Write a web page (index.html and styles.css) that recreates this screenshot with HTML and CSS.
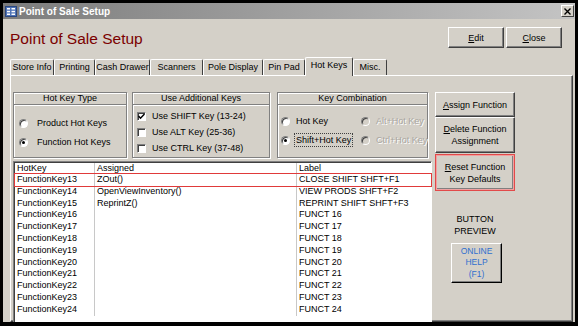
FILE: index.html
```html
<!DOCTYPE html>
<html lang="en">
<head>
  <meta charset="UTF-8">
  <title>Point of Sale Setup</title>
  <link rel="stylesheet" href="styles.css">
</head>
<body>
<div class="window">
  <div class="titlebar">
    <svg class="app-icon" width="12" height="11" viewBox="0 0 12 11">
      <rect x="0.5" y="0.5" width="11" height="10" fill="#4f74b8" stroke="#2b477f"/>
      <rect x="2" y="2" width="3" height="1.5" fill="#fff"/>
      <rect x="2" y="4.8" width="3" height="1.5" fill="#fff"/>
      <rect x="2" y="7.5" width="3" height="1.5" fill="#fff"/>
      <rect x="6.5" y="2" width="3.5" height="1.5" fill="#fff"/>
      <rect x="6.5" y="4.8" width="3.5" height="1.5" fill="#fff"/>
      <rect x="6.5" y="7.5" width="3.5" height="1.5" fill="#fff"/>
    </svg>
    <span class="title-text">Point of Sale Setup</span>
    <span class="title-close">
      <svg width="7" height="7" viewBox="0 0 7 7"><path d="M0.5 0.5 L6.5 6.5 M6.5 0.5 L0.5 6.5" stroke="#000" stroke-width="1.4"/></svg>
    </span>
  </div>

  <div class="header">
    <h1>Point of Sale Setup</h1>
    <div class="header-buttons">
      <button class="btn btn-head"><u>E</u>dit</button>
      <button class="btn btn-head"><u>C</u>lose</button>
    </div>
  </div>

  <div class="tabs">
    <div class="tab">Store Info</div>
    <div class="tab">Printing</div>
    <div class="tab">Cash Drawer</div>
    <div class="tab">Scanners</div>
    <div class="tab">Pole Display</div>
    <div class="tab">Pin Pad</div>
    <div class="tab tab-active">Hot Keys</div>
    <div class="tab">Misc.</div>
  </div>

  <div class="panel">
    <div class="left">
      <div class="groups">
        <div class="group group-type">
          <div class="group-head">Hot Key Type</div>
          <div class="type-body">
            <div class="opt"><span class="radio"></span>Product Hot Keys</div>
            <div class="opt"><span class="radio on"></span>Function Hot Keys</div>
          </div>
        </div>
        <div class="group group-extra">
          <div class="group-head">Use Additional Keys</div>
          <div class="extra-body">
            <div class="opt"><span class="check"><svg width="7" height="7" viewBox="0 0 7 7"><path d="M0.5 3 L2.5 5.2 L6.5 1" fill="none" stroke="#000" stroke-width="1.5"/></svg></span>Use SHIFT Key (13-24)</div>
            <div class="opt"><span class="check"></span>Use ALT Key (25-36)</div>
            <div class="opt"><span class="check"></span>Use CTRL Key (37-48)</div>
          </div>
        </div>
        <div class="group group-combo">
          <div class="group-head">Key Combination</div>
          <div class="combo-body">
            <div class="opt"><span class="radio"></span><span class="opt-text">Hot Key</span></div>
            <div class="opt off"><span class="radio"></span><span class="opt-text">Alt+Hot Key</span></div>
            <div class="opt"><span class="radio on"></span><span class="opt-text focus">Shift+Hot Key</span></div>
            <div class="opt off"><span class="radio"></span><span class="opt-text">Ctrl+Hot Key</span></div>
          </div>
        </div>
      </div>

      <div class="list">
        <div class="row row-head"><span>HotKey</span><span>Assigned</span><span>Label</span></div>
        <div class="row row-marked"><span>FunctionKey13</span><span>ZOut()</span><span>CLOSE SHIFT SHFT+F1</span></div>
        <div class="row"><span>FunctionKey14</span><span>OpenViewInventory()</span><span>VIEW PRODS SHFT+F2</span></div>
        <div class="row"><span>FunctionKey15</span><span>ReprintZ()</span><span>REPRINT SHIFT SHFT+F3</span></div>
        <div class="row"><span>FunctionKey16</span><span></span><span>FUNCT 16</span></div>
        <div class="row"><span>FunctionKey17</span><span></span><span>FUNCT 17</span></div>
        <div class="row"><span>FunctionKey18</span><span></span><span>FUNCT 18</span></div>
        <div class="row"><span>FunctionKey19</span><span></span><span>FUNCT 19</span></div>
        <div class="row"><span>FunctionKey20</span><span></span><span>FUNCT 20</span></div>
        <div class="row"><span>FunctionKey21</span><span></span><span>FUNCT 21</span></div>
        <div class="row"><span>FunctionKey22</span><span></span><span>FUNCT 22</span></div>
        <div class="row"><span>FunctionKey23</span><span></span><span>FUNCT 23</span></div>
        <div class="row"><span>FunctionKey24</span><span></span><span>FUNCT 24</span></div>
      </div>
    </div>

    <div class="side">
      <button class="btn btn-assign"><u>A</u>ssign Function</button>
      <button class="btn btn-delete"><u>D</u>elete Function Assignment</button>
      <button class="btn btn-reset"><u>R</u>eset Function Key Defaults</button>
      <div class="preview-title">BUTTON<br>PREVIEW</div>
      <button class="btn btn-preview">ONLINE<br>HELP<br>(F1)</button>
    </div>
  </div>
</div>
</body>
</html>
```

FILE: styles.css
```css
* {
  margin: 0;
  padding: 0;
  box-sizing: border-box;
}

body {
  width: 578px;
  height: 326px;
  overflow: hidden;
  background: #000;
  font-family: "Liberation Sans", Arial, sans-serif;
  font-size: 9px;
  color: #000;
}

.window {
  margin: 3px 3px 0 3px;
  height: 319px;
  background: #d4d0c8;
  display: flex;
  flex-direction: column;
  overflow: hidden;
}

/* title bar */
.titlebar {
  flex: none;
  height: 16px;
  display: flex;
  align-items: center;
  padding: 0 1px 0 2px;
  background: linear-gradient(to right, #7c7c7c, #c4c4c4);
  color: #fff;
}

.app-icon {
  margin-right: 2px;
}

.title-text {
  flex: 1;
  font-size: 10px;
  font-weight: bold;
}

.title-close {
  width: 13px;
  height: 12px;
  display: flex;
  align-items: center;
  justify-content: center;
  background: #d4d0c8;
  border: 1px solid;
  border-color: #fff #404040 #404040 #fff;
}

/* header */
.header {
  flex: none;
  height: 38px;
  display: flex;
  align-items: center;
  justify-content: space-between;
  padding: 0 13px 1px 7px;
}

h1 {
  font-size: 15.5px;
  font-weight: normal;
  color: #7b0000;
  margin-top: 2px;
}

.header-buttons {
  display: flex;
  gap: 2px;
}

.btn {
  background: #d4d0c8;
  border: 1px solid;
  border-color: #fff #404040 #404040 #fff;
  box-shadow: inset -1px -1px 0 #808080;
  font-family: "Liberation Sans", Arial, sans-serif;
  font-size: 9px;
  color: #000;
  line-height: 12px;
}

.btn-head {
  width: 56px;
  height: 21px;
}

/* tabs */
.tabs {
  flex: none;
  display: grid;
  grid-template-columns: 44px 41px 55px 53px 60px 42px 48px 34px;
  height: 18px;
  margin-left: 7px;
  align-items: end;
  position: relative;
  z-index: 1;
}

.tab {
  height: 16px;
  line-height: 14px;
  text-align: center;
  border: 1px solid;
  border-color: #fff #404040 transparent #fff;
  border-bottom: none;
  border-radius: 2px 2px 0 0;
  white-space: nowrap;
}

.tab-active {
  height: 19px;
  margin-bottom: -1px;
  background: #d4d0c8;
  line-height: 15px;
}

/* panel */
.panel {
  flex: 1;
  min-height: 0;
  margin: 0 2px 0 7px;
  padding: 16px 0 0 2px;
  display: flex;
  gap: 3px;
  border: 1px solid;
  border-color: #fff #404040 #404040 #fff;
  box-shadow: inset -1px -1px 0 #808080;
}

.left {
  flex: none;
  width: 419px;
  display: flex;
  flex-direction: column;
  gap: 3px;
}

.groups {
  flex: none;
  display: flex;
  height: 66px;
}

.group {
  display: flex;
  flex-direction: column;
  border: 1px solid #808080;
  box-shadow: 1px 1px 0 #fff, inset 1px 1px 0 #fff;
}

.group-type {
  width: 114px;
  margin-right: 5px;
}

.group-extra {
  width: 138px;
  margin-right: 7px;
}

.group-combo {
  width: 151px;
}

.group-head {
  height: 12px;
  line-height: 11px;
  text-align: center;
  border-bottom: 1px solid #808080;
  box-shadow: 0 1px 0 #fff;
}

.opt {
  display: flex;
  align-items: center;
  height: 12px;
  white-space: nowrap;
}

.radio {
  position: relative;
  flex: none;
  width: 9px;
  height: 9px;
  border-radius: 50%;
  background: #fff;
  border: 1px solid;
  border-color: #808080 #fff #fff #808080;
  box-shadow: inset 1px 1px 0 #404040;
}

.radio.on::after {
  content: "";
  position: absolute;
  left: 2px;
  top: 2px;
  width: 3px;
  height: 3px;
  border-radius: 50%;
  background: #000;
}

.check {
  flex: none;
  width: 9px;
  height: 9px;
  display: flex;
  align-items: center;
  justify-content: center;
  background: #fff;
  border: 1px solid;
  border-color: #808080 #fff #fff #808080;
  box-shadow: inset 1px 1px 0 #404040;
  margin-right: 6px;
}

.type-body {
  padding: 12px 0 0 5px;
  display: flex;
  flex-direction: column;
  gap: 7px;
}

.type-body .radio {
  margin-right: 9px;
}

.extra-body {
  padding: 5px 0 0 4px;
  display: flex;
  flex-direction: column;
  gap: 4px;
}

.combo-body {
  padding: 10px 0 0 3px;
  display: grid;
  grid-template-columns: 80px 1fr;
  row-gap: 7px;
}

.combo-body .radio {
  margin-right: 4px;
}

.opt-text {
  padding: 1px;
  border: 1px solid transparent;
}

.opt-text.focus {
  border: 1px dotted #404040;
}

.off .opt-text {
  color: #a9a6a0;
  text-shadow: 1px 1px 0 #fff;
}

.off .radio {
  background: #d4d0c8;
}

/* list */
.list {
  flex: none;
  height: 170px;
  padding: 1px 0 0 1px;
  background: #fff;
  border: 1px solid;
  border-color: #808080 #fff #fff #808080;
  box-shadow: inset 1px 1px 0 #404040;
}

.row {
  display: grid;
  grid-template-columns: 80px 202px 1fr;
  height: 11.8px;
  line-height: 11.8px;
}

.row span {
  padding-left: 2px;
  border-right: 1px solid #c8c8c8;
  white-space: nowrap;
}

.row span:last-child {
  border-right: none;
}

.row-head {
  height: 11px;
  line-height: 11px;
}

.row-marked {
  outline: 1px solid #e03a3a;
}

/* side buttons */
.side {
  flex: none;
  width: 80px;
  display: flex;
  flex-direction: column;
}

.btn-assign {
  flex: none;
  height: 25px;
}

.btn-delete {
  flex: none;
  height: 36px;
}

.btn-reset {
  flex: none;
  height: 37px;
  margin-top: 1px;
  border: 1px solid #e24a4a;
  box-shadow: inset 0 0 0 1px #f0a0a0, inset -2px -2px 0 #808080;
}

.preview-title {
  margin-top: 22px;
  text-align: center;
  line-height: 12px;
}

.btn-preview {
  flex: none;
  width: 51px;
  height: 40px;
  margin: 6px 0 0 16px;
  font-size: 8.5px;
  line-height: 11.5px;
  color: #2f6fcf;
  border-color: #fff #000 #000 #fff;
}
```
